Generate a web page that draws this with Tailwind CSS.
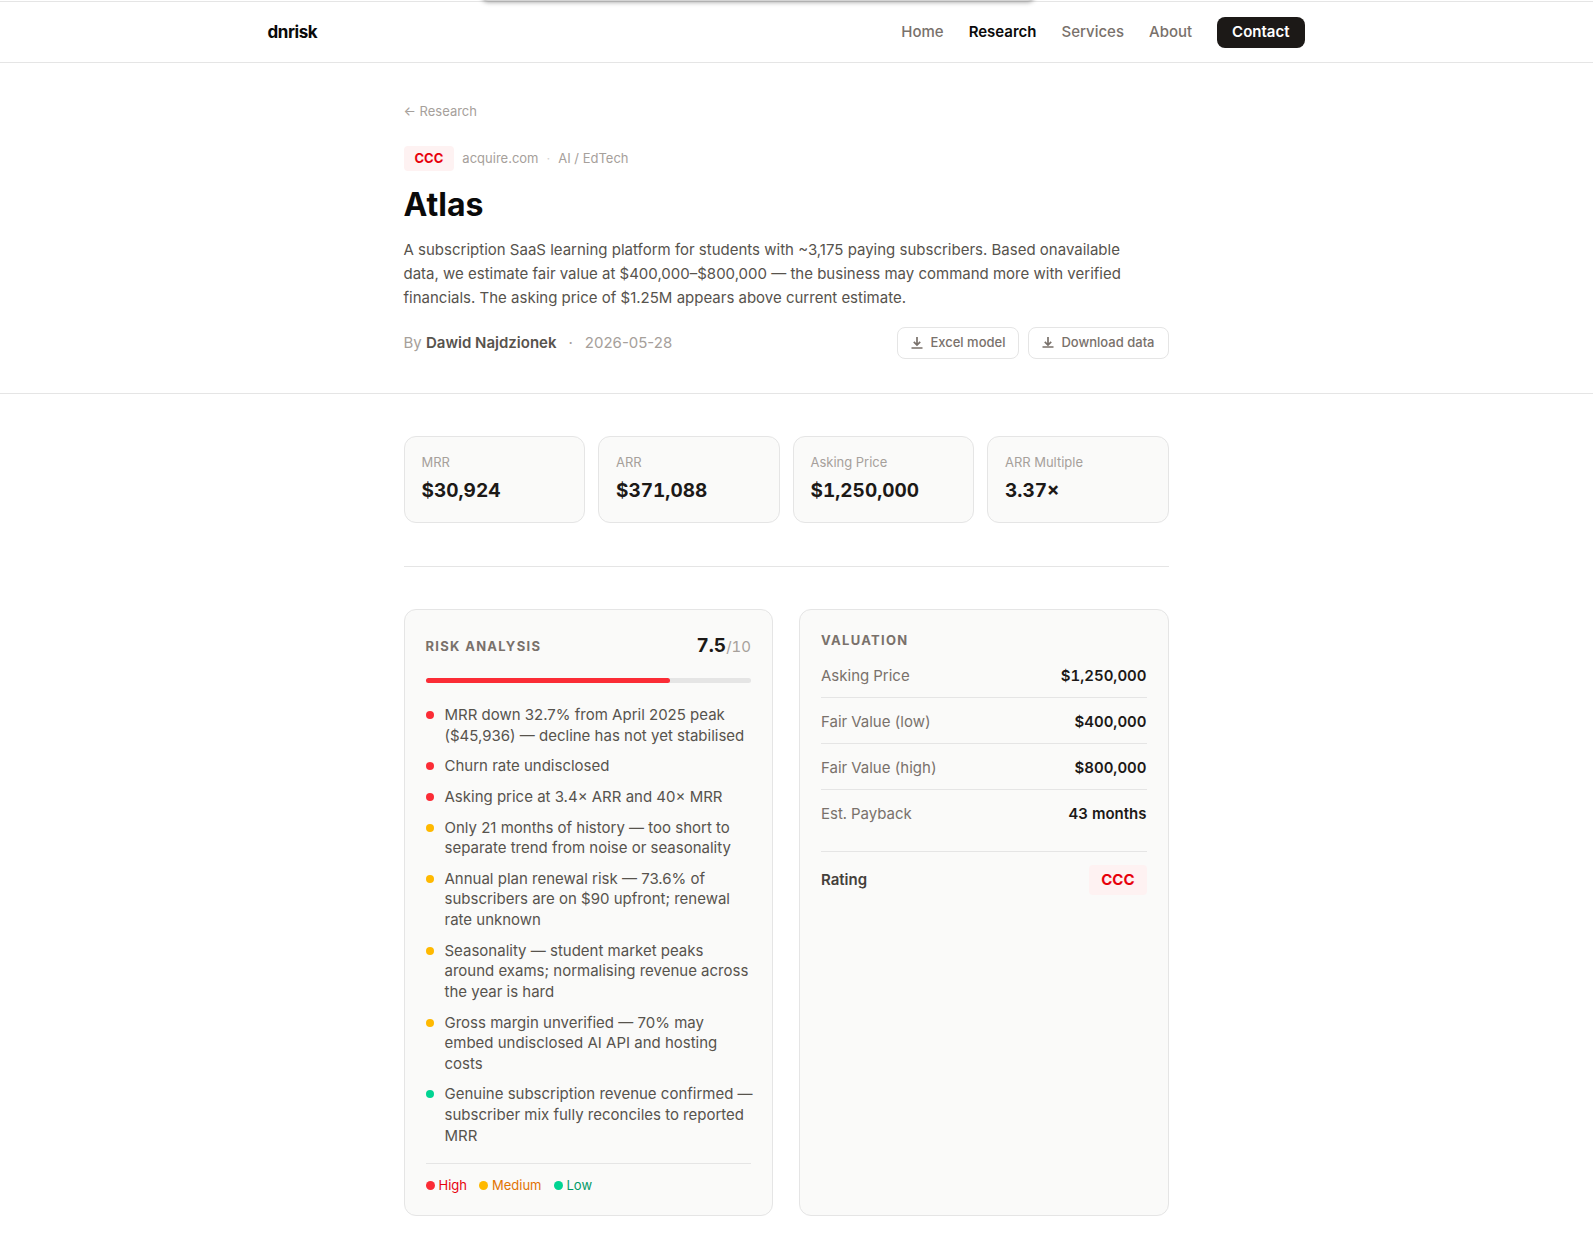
<!DOCTYPE html>
<html lang="en">
<head>
<meta charset="utf-8">
<meta name="viewport" content="width=device-width, initial-scale=1">
<title>Atlas – dnrisk</title>
<script src="https://cdn.jsdelivr.net/npm/@tailwindcss/browser@4"></script>
</head>
<body class="relative min-h-screen overflow-x-hidden bg-white font-['Inter',sans-serif] text-[15px] text-stone-600">
  <!-- Notification bar parked just above the viewport; only its edge and shadow show -->
  <div class="absolute inset-x-0 top-0 z-10 h-3 overflow-hidden pr-[77px]" aria-hidden="true">
    <div class="mx-auto -mt-4 h-[17px] w-[552px] rounded-md bg-neutral-300 shadow-[0_1px_5px_rgba(0,0,0,0.4)]"></div>
  </div>

  <header class="mt-px border-y border-neutral-200 pr-[21px]">
    <div class="mx-auto flex h-[60px] max-w-[1071px] items-center justify-between px-[17px]">
      <a href="#" class="text-[17px] leading-6 font-bold tracking-tight text-neutral-950">dnrisk</a>
      <nav class="flex items-center gap-[25px] leading-5 font-medium text-stone-500">
        <a href="#">Home</a>
        <a href="#" class="font-semibold text-neutral-950" aria-current="page">Research</a>
        <a href="#">Services</a>
        <a href="#">About</a>
        <a href="#" class="flex h-[31px] items-center rounded-lg bg-stone-900 px-[15px] font-semibold text-white">Contact</a>
      </nav>
    </div>
  </header>

  <section class="border-b border-neutral-200 pr-[21px]">
    <div class="mx-auto max-w-[765px] pt-10 pb-[34px]">
      <a href="#" class="block text-[13px] leading-[17px] text-stone-400">← Research</a>
      <div class="mt-[26px] flex items-center text-[13px] leading-[17px] text-stone-400">
        <span class="mr-2 rounded bg-red-50 px-[11px] py-1 font-bold text-red-600">CCC</span>
        <span>acquire.com</span>
        <span class="mx-2 text-stone-300">·</span>
        <span>AI / EdTech</span>
      </div>
      <h1 class="mt-[13px] text-[32px] leading-[42px] font-bold text-neutral-950">Atlas</h1>
      <p class="mt-3 max-w-[720px] leading-6">A subscription SaaS learning platform for students with ~3,175 paying subscribers. Based onavailable data, we estimate fair value at $400,000–$800,000 — the business may command more with verified financials. The asking price of $1.25M appears above current estimate.</p>
      <div class="mt-[17px] flex items-center justify-between">
        <p class="flex text-stone-400">
          <span>By <strong class="font-semibold text-stone-600">Dawid Najdzionek</strong></span>
          <span class="mx-3">·</span>
          <time datetime="2026-05-28">2026-05-28</time>
        </p>
        <div class="flex gap-[9px] text-[13px] font-medium text-stone-500">
          <button class="flex h-8 items-center gap-[7px] rounded-lg border border-neutral-200 px-[13px]">
            <svg class="size-3" viewBox="0 0 12 12" fill="none" stroke="currentColor" stroke-width="1.7"><path d="M6 0v8M2.8 4.8L6 8l3.2-3.2M.5 11h11"/></svg>
            Excel model
          </button>
          <button class="flex h-8 items-center gap-[7px] rounded-lg border border-neutral-200 px-[13px]">
            <svg class="size-3" viewBox="0 0 12 12" fill="none" stroke="currentColor" stroke-width="1.7"><path d="M6 0v8M2.8 4.8L6 8l3.2-3.2M.5 10h11"/></svg>
            Download data
          </button>
        </div>
      </div>
    </div>
  </section>

  <main class="pr-[21px]">
    <div class="mx-auto max-w-[765px] pt-[42px] pb-10">
      <dl class="grid grid-cols-4 gap-[13px] tabular-nums">
        <div class="rounded-xl border border-neutral-200 bg-stone-50 p-[17px]">
          <dt class="text-[13px] leading-[17px] text-stone-400">MRR</dt>
          <dd class="mt-1.5 text-[19px] leading-7 font-bold text-stone-900">$30,924</dd>
        </div>
        <div class="rounded-xl border border-neutral-200 bg-stone-50 p-[17px]">
          <dt class="text-[13px] leading-[17px] text-stone-400">ARR</dt>
          <dd class="mt-1.5 text-[19px] leading-7 font-bold text-stone-900">$371,088</dd>
        </div>
        <div class="rounded-xl border border-neutral-200 bg-stone-50 p-[17px]">
          <dt class="text-[13px] leading-[17px] text-stone-400">Asking Price</dt>
          <dd class="mt-1.5 text-[19px] leading-7 font-bold text-stone-900">$1,250,000</dd>
        </div>
        <div class="rounded-xl border border-neutral-200 bg-stone-50 p-[17px]">
          <dt class="text-[13px] leading-[17px] text-stone-400">ARR Multiple</dt>
          <dd class="mt-1.5 text-[19px] leading-7 font-bold text-stone-900">3.37×</dd>
        </div>
      </dl>

      <hr class="mt-[43px] mb-[42px] border-neutral-200">

      <div class="grid grid-cols-2 gap-[26px]">
        <section class="rounded-xl border border-neutral-200 bg-stone-50 p-[21px]">
          <div class="flex items-center justify-between">
            <h2 class="text-[13px] leading-[17px] font-bold tracking-widest text-stone-500">RISK ANALYSIS</h2>
            <p class="leading-[30px] text-stone-400 tabular-nums"><strong class="text-[19px] font-bold text-stone-900">7.5</strong>/10</p>
          </div>
          <div class="mt-4 h-[5px] rounded-full bg-neutral-200">
            <div class="h-full w-3/4 rounded-full bg-red-500"></div>
          </div>
          <ul class="-mr-1 mt-[22px] flex flex-col gap-2.5 leading-snug">
            <li class="flex gap-[11px]"><span class="mt-1.5 size-2 shrink-0 rounded-full bg-red-500"></span><span>MRR down 32.7% from April 2025 peak ($45,936) — decline has not yet stabilised</span></li>
            <li class="flex gap-[11px]"><span class="mt-1.5 size-2 shrink-0 rounded-full bg-red-500"></span><span>Churn rate undisclosed</span></li>
            <li class="flex gap-[11px]"><span class="mt-1.5 size-2 shrink-0 rounded-full bg-red-500"></span><span>Asking price at 3.4× ARR and 40× MRR</span></li>
            <li class="flex gap-[11px]"><span class="mt-1.5 size-2 shrink-0 rounded-full bg-amber-400"></span><span>Only 21 months of history — too short to separate trend from noise or seasonality</span></li>
            <li class="flex gap-[11px]"><span class="mt-1.5 size-2 shrink-0 rounded-full bg-amber-400"></span><span>Annual plan renewal risk — 73.6% of subscribers are on $90 upfront; renewal rate unknown</span></li>
            <li class="flex gap-[11px]"><span class="mt-1.5 size-2 shrink-0 rounded-full bg-amber-400"></span><span>Seasonality — student market peaks around exams; normalising revenue across the year is hard</span></li>
            <li class="flex gap-[11px]"><span class="mt-1.5 size-2 shrink-0 rounded-full bg-amber-400"></span><span>Gross margin unverified — 70% may embed undisclosed AI API and hosting costs</span></li>
            <li class="flex gap-[11px]"><span class="mt-1.5 size-2 shrink-0 rounded-full bg-emerald-400"></span><span>Genuine subscription revenue confirmed — subscriber mix fully reconciles to reported MRR</span></li>
          </ul>
          <div class="mt-[17px] flex gap-3 border-t border-neutral-200 pt-[13px] text-[13px] leading-[17px]">
            <span class="flex items-center gap-1 text-red-600"><span class="size-[9px] rounded-full bg-red-500"></span>High</span>
            <span class="flex items-center gap-1 text-amber-600"><span class="size-[9px] rounded-full bg-amber-400"></span>Medium</span>
            <span class="flex items-center gap-1 text-emerald-600"><span class="size-[9px] rounded-full bg-emerald-400"></span>Low</span>
          </div>
        </section>

        <section class="rounded-xl border border-neutral-200 bg-stone-50 p-[21px]">
          <h2 class="text-[13px] leading-[18px] font-bold tracking-widest text-stone-500">VALUATION</h2>
          <table class="mt-[3px] w-full leading-[21px] tabular-nums">
            <tbody>
              <tr class="border-b border-neutral-200"><th scope="row" class="pt-[13px] pb-[11px] text-left font-normal text-stone-500">Asking Price</th><td class="pt-[13px] pb-[11px] text-right font-semibold text-stone-900">$1,250,000</td></tr>
              <tr class="border-b border-neutral-200"><th scope="row" class="pt-[13px] pb-[11px] text-left font-normal text-stone-500">Fair Value (low)</th><td class="pt-[13px] pb-[11px] text-right font-semibold text-stone-900">$400,000</td></tr>
              <tr class="border-b border-neutral-200"><th scope="row" class="pt-[13px] pb-[11px] text-left font-normal text-stone-500">Fair Value (high)</th><td class="pt-[13px] pb-[11px] text-right font-semibold text-stone-900">$800,000</td></tr>
              <tr><th scope="row" class="pt-[13px] pb-[11px] text-left font-normal text-stone-500">Est. Payback</th><td class="pt-[13px] pb-[11px] text-right font-semibold text-stone-900">43 months</td></tr>
            </tbody>
          </table>
          <div class="mt-4 flex items-center justify-between border-t border-neutral-200 pt-[13px]">
            <span class="font-semibold text-stone-700">Rating</span>
            <span class="rounded bg-red-50 px-3 py-1 leading-[22px] font-bold text-red-600">CCC</span>
          </div>
        </section>
      </div>
    </div>
  </main>
</body>
</html>
